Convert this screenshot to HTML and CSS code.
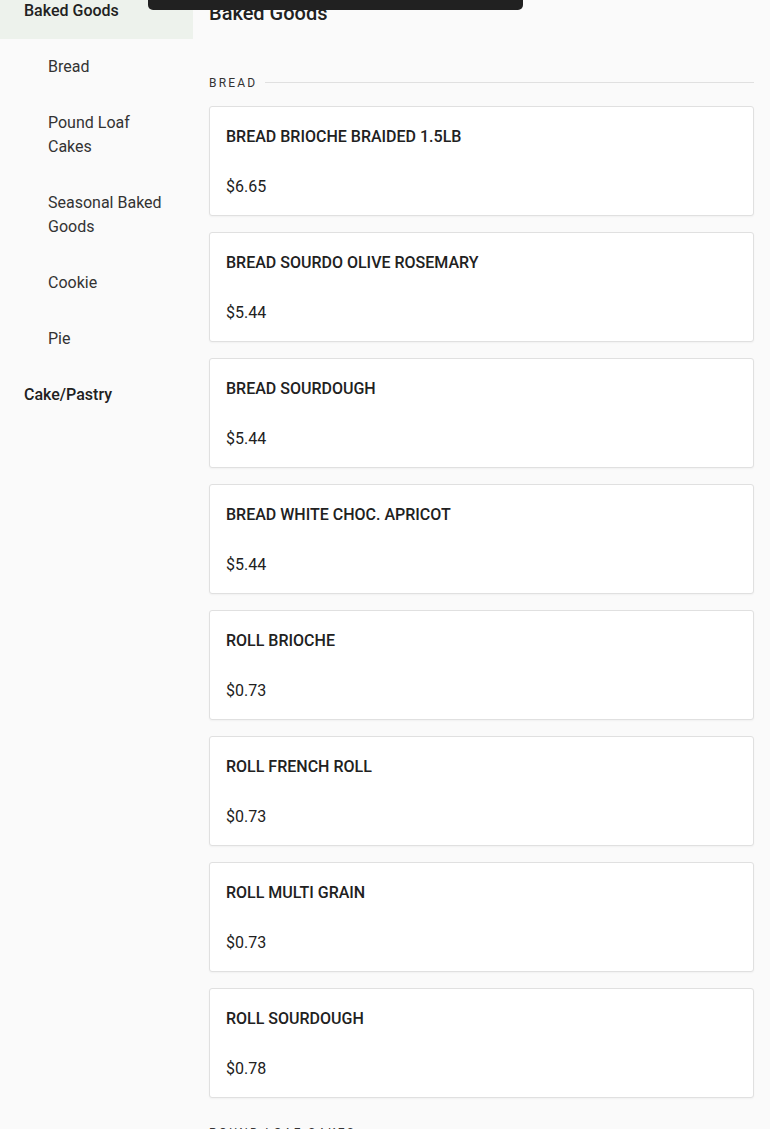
FILE: index.html
```html
<!DOCTYPE html>
<html lang="en">
<head>
<meta charset="utf-8">
<title>Baked Goods</title>
<link rel="stylesheet" href="styles.css">
</head>
<body>
<div class="page">
  <nav class="sidebar">
    <a class="nav-item nav-top active">Baked Goods</a>
    <a class="nav-item nav-sub">Bread</a>
    <a class="nav-item nav-sub">Pound Loaf Cakes</a>
    <a class="nav-item nav-sub">Seasonal Baked Goods</a>
    <a class="nav-item nav-sub">Cookie</a>
    <a class="nav-item nav-sub">Pie</a>
    <a class="nav-item nav-top">Cake/Pastry</a>
  </nav>
  <main class="main">
    <h1 class="title">Baked Goods</h1>
    <section class="section">
      <div class="section-head"><span class="section-label">BREAD</span><span class="section-rule"></span></div>
      <div class="cards">
        <div class="card"><div class="card-name">BREAD BRIOCHE BRAIDED 1.5LB</div><div class="card-price">$6.65</div></div>
        <div class="card"><div class="card-name">BREAD SOURDO OLIVE ROSEMARY</div><div class="card-price">$5.44</div></div>
        <div class="card"><div class="card-name">BREAD SOURDOUGH</div><div class="card-price">$5.44</div></div>
        <div class="card"><div class="card-name">BREAD WHITE CHOC. APRICOT</div><div class="card-price">$5.44</div></div>
        <div class="card"><div class="card-name">ROLL BRIOCHE</div><div class="card-price">$0.73</div></div>
        <div class="card"><div class="card-name">ROLL FRENCH ROLL</div><div class="card-price">$0.73</div></div>
        <div class="card"><div class="card-name">ROLL MULTI GRAIN</div><div class="card-price">$0.73</div></div>
        <div class="card"><div class="card-name">ROLL SOURDOUGH</div><div class="card-price">$0.78</div></div>
      </div>
    </section>
    <section class="section">
      <div class="section-head"><span class="section-label">POUND LOAF CAKES</span><span class="section-rule"></span></div>
    </section>
  </main>
</div>
<div class="toast"></div>
</body>
</html>
```

FILE: styles.css
```css
html, body {
  margin: 0;
  padding: 0;
  background: #fafafa;
  overflow: hidden;
  height: 1129px;
}
body {
  font-family: Roboto, "Liberation Sans", sans-serif;
  color: #212121;
}
.page {
  display: flex;
  align-items: flex-start;
  margin-top: -17px;
}
.sidebar {
  width: 193px;
  flex: none;
  display: flex;
  flex-direction: column;
}
.nav-item {
  display: block;
  padding: 16px 24px;
  font-size: 16px;
  line-height: 24px;
  color: #2b2b2b;
}
.nav-top {
  font-weight: 500;
  color: #212121;
}
.nav-sub {
  padding-left: 48px;
  padding-right: 20px;
  font-weight: 400;
  color: #333;
}
.active {
  background: #edf2ec;
}
.main {
  flex: 1;
  min-width: 0;
  padding: 18px 16px 0 16px;
}
.title {
  margin: 0 0 50px 0;
  font-size: 20px;
  line-height: 24px;
  font-weight: 500;
  color: #212121;
}
.section {
  margin-bottom: 27px;
}
.section-head {
  display: flex;
  align-items: center;
  height: 16px;
  margin-bottom: 15px;
}
.section-label {
  font-size: 12px;
  line-height: 16px;
  letter-spacing: 2.2px;
  color: #333;
  font-weight: 400;
}
.section-rule {
  flex: 1;
  height: 1px;
  background: #e0e0e0;
  margin-left: 8px;
  margin-top: -2px;
}
.cards {
  display: flex;
  flex-direction: column;
  gap: 16px;
}
.card {
  background: #fff;
  border: 1px solid #e0e0e0;
  border-radius: 3px;
  padding: 18px 16px 16px 16px;
  box-shadow: 0 1px 2px rgba(0,0,0,0.04);
}
.card-name {
  font-size: 16px;
  line-height: 24px;
  font-weight: 500;
  color: #212121;
  margin-bottom: 26px;
}
.card-price {
  font-size: 16px;
  line-height: 24px;
  font-weight: 400;
  color: #212121;
}
.toast {
  position: fixed;
  top: 0;
  left: 148px;
  width: 375px;
  height: 10px;
  background: #212121;
  border-radius: 0 0 5px 5px;
}
```
